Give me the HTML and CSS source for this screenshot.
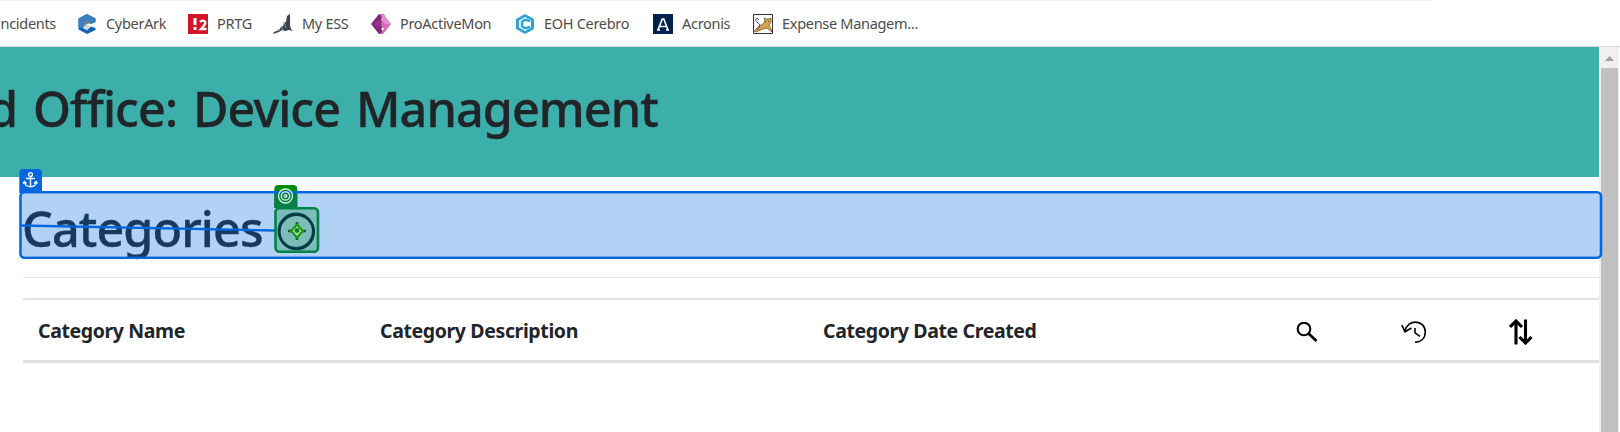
FILE: index.html
```html
<!DOCTYPE html>
<html lang="en">
<head>
<meta charset="utf-8">
<title>Device Management</title>
<link rel="stylesheet" href="styles.css">
</head>
<body>
<nav class="bookmarks">
  <span class="mark first"><b>ncidents</b></span>
  <span class="mark"><svg width="20" height="20" viewBox="0 0 20 20"><path d="m10 0 8.500 4.500V8L14 10l-4-2.500L6 9v5l4 2 4-3.500 4.500 1.500v2L10 20l-8.500-4.500v-11z" fill="#1763b4"/><path d="M1.500 4.500 10 0l8.500 4.500V8L14 10l-4-3-4.500 2v5l-4-1z" fill="#3d80c2"/><path d="m6 9 4-3 4 3-4 1-4 4z" fill="#777e86"/><path d="m10 10 4 2.500-4 3.500-4-2z" fill="#c9d8e8"/></svg><b>CyberArk</b></span>
  <span class="mark"><svg width="20" height="20" viewBox="0 0 20 20"><path d="M0 0h20v20H0z" fill="#d31623"/><path d="M7 4v7M7 13v3" stroke="#fff" stroke-width="3"/><path d="M12 8q2-2 4-1 2 1 1 3-1 2-4 5h5.500" fill="none" stroke="#fff" stroke-width="2.300"/></svg><b>PRTG</b></span>
  <span class="mark"><svg width="20" height="20" viewBox="0 0 20 20"><path d="M14 2 17 0v11l1 4 2 2-4-1-4 1-3-1-3 2-6 2 1-2 5-2 2-3 2-1 1-3 2-1z" fill="#3b4352"/><path d="m5 15 2 2m1-5 2 4m1-8 2 6" stroke="#8b929d"/></svg><b>My ESS</b></span>
  <span class="mark"><svg width="20" height="20" viewBox="0 0 20 20"><path d="M8 0h4l2 2-4 4 4 4-4 5 3 3-2 2H8L0 10z" fill="#7e2879"/><path d="M8 0h4l8 10-8 10H9l4-5-4-5 4-5z" fill="#d86bb9"/><path d="M12 0 20 10h-6l-4-5z" fill="#e391cc"/><path d="m7 5 4 5-4 5-4-5z" fill="#98308f"/></svg><b>ProActiveMon</b></span>
  <span class="mark"><svg width="20" height="20" viewBox="0 0 20 20"><path d="m10 0 9 5v10l-9 5-9-5V5z" fill="#2ba3d4"/><path d="m10 3 6 3.500v7L10 17l-6-3.500v-7z" fill="#fff"/><path d="M14 8V7l-2-1H9L7 8v4l2 2h3l2-1v-1" fill="none" stroke="#2ba3d4" stroke-width="2.400"/></svg><b>EOH Cerebro</b></span>
  <span class="mark"><svg width="20" height="20" viewBox="0 0 20 20"><path d="M0 0h20v20H0z" fill="#00204d"/><path d="M5 16 9.200 5h1.600L15 16M6 12.500h8M4 16h3m6 0h3" fill="none" stroke="#fff" stroke-width="1.700"/></svg><b>Acronis</b></span>
  <span class="mark"><svg width="20" height="20" viewBox="0 0 20 20"><path d="M.5.5h19v19H.5z" fill="#fff" stroke="#333"/><path d="m11 4 2 1h3l2-1v4l-2 3 2 4 1 3-5-4-4 1-7 3-2-1 5-5 4-2 2-3z" fill="#d5a14d" stroke="#66502c" stroke-width=".7"/><path d="M4 16Q9 11 5 9 1 6 4 4l2 2M12 7l1 1m2-1 1 1" fill="none" stroke="#555"/></svg><b>Expense Managem...</b></span>
</nav>
<div class="viewport">
  <main class="page">
    <header class="banner"><h1 class="banner-title">d Office: Device Management</h1></header>
    <section class="heading"><h1 class="title">Categories</h1>
      <svg class="add" width="38" height="38" viewBox="0 0 38 38"><circle cx="19" cy="19" r="17.200" fill="none" stroke="#212529" stroke-width="2.600"/></svg>
    </section>
    <div class="row">
      <span class="th">Category Name</span>
      <span class="th">Category Description</span>
      <span class="th">Category Date Created</span>
      <svg width="22" height="26" viewBox="0 0 22 26"><circle cx="8" cy="10" r="6.300" fill="none" stroke="#000" stroke-width="2.100"/><path d="m12.500 14.500 8 7.500" stroke="#000" stroke-width="2.700"/></svg>
      <svg width="26" height="26" viewBox="0 0 26 26"><path d="M4 12C6 0 24 0 24.300 13c0 6-4 10-10.300 10.300M.8 6.200 4 12.800 10.500 9M14 9v4.800l5 3.500" fill="none" stroke="#000" stroke-width="1.600"/></svg>
      <svg width="24" height="26" viewBox="0 0 24 26"><path d="M7 25.500V3M1 8l6-6 6 6M16.500.5V23M10.500 18l6 6 6-6" fill="none" stroke="#000" stroke-width="3.100"/></svg>
    </div>
  </main>
  <aside class="scrollbar"><svg width="19" height="21" viewBox="0 0 19 21"><path d="M6 14h9l-4.500-5z" fill="#a0a0a0"/></svg><div class="thumb"></div></aside>
</div>
<svg class="overlay" width="1620" height="110" viewBox="0 0 1620 110">
  <path d="M274.300 48V29q0-4 4-4h15q4 0 4 4v19z" fill="#008a0e"/>
  <path d="M274.300 33h23v15h-23z" fill="#008047"/>
  <rect x="20.500" y="32.300" width="1580.500" height="65.500" rx="4" fill="none" stroke="#0067df" stroke-width="2.600"/>
  <path d="M21.800 33.600H274.300V48H297.300V33.600H1599.700V96.500H21.800z" fill="#0069de" fill-opacity=".3"/>
  <g fill="none" stroke="#d8f2e0" stroke-width="1.300"><circle cx="285.500" cy="36" r="7"/><circle cx="285.500" cy="36" r="4.200"/><circle cx="285.500" cy="36" r="1.300"/></g>
  <path d="M19.300 33V13q0-4 4-4H38q4 0 4 4v20z" fill="#0067df"/>
  <g fill="none" stroke="#fff" stroke-width="1.400"><circle cx="30.500" cy="14.500" r="1.900"/><path d="M30.500 16.500V27M26 18.500h9M24.500 21.500c0 7 12 7 12 0m-13.500 2 1.500-2 2 2m7.500 0 2-2 1.500 2"/></g>
  <path d="m20 65.500 255 5" stroke="#0067df" stroke-width="2.400"/>
  <rect x="275.500" y="48.300" width="42.500" height="43.500" rx="4" fill="#008a30" fill-opacity=".3" stroke="#008345" stroke-width="2.600"/>
  <circle cx="296.500" cy="71.800" r="17.200" fill="none" stroke="#003b48" stroke-width="2.600"/>
  <path d="M297 62v4m0 10v4m-9-9h4m10 0h4" stroke="#145b2d" stroke-width="2.600"/>
  <path d="m297 64.500 6 6.500-6 6.500-6-6.500z" fill="#a9d9a9" stroke="#159b10" stroke-width="2"/><circle cx="297" cy="70.500" r="2.400" fill="#138016"/>
</svg>
</body>
</html>
```
FILE: styles.css
```css
* { box-sizing: border-box; }
body { margin: 0; width: 1620px; height: 432px; overflow: hidden; position: relative; background: #fff; color: #212529; font-family: "Noto Sans", "Open Sans", sans-serif; }
svg { display: block; flex: none; }
.bookmarks { height: 47px; display: grid; grid-template-columns: 77px 111px 85px 98px 144px 138px 100px 1fr; align-items: center; border-bottom: 1px solid #d9d9d9; background: linear-gradient(#f2f2f2, #f2f2f2) 0 0 / 1432px 1px no-repeat; padding-top: 1px; }
.mark { display: flex; align-items: center; gap: 9px; white-space: nowrap; font-size: 14.5px; line-height: 20px; }
.mark b { font-weight: 400; color: #4c4c4c; letter-spacing: -.3px; padding-bottom: 2px; }
.first { width: 56px; justify-content: flex-end; }
.viewport { display: flex; height: 385px; }
.page { width: 1599px; }
.banner { height: 130px; background: #3cafaa; display: flex; align-items: center; padding-bottom: 9px; }
.banner-title, .title { margin: 0; white-space: nowrap; font-size: 48.5px; line-height: 60px; font-weight: 500; letter-spacing: -.9px; -webkit-text-stroke: .4px #212529; }
.banner-title { width: 658px; display: flex; justify-content: flex-end; word-spacing: 4px; }
.heading { margin-left: 23px; height: 101px; display: flex; align-items: flex-start; padding-top: 21px; border-bottom: 1px solid #e5e5e5; }
.title { width: 255px; margin-left: -1px; }
.add { margin-top: 14px; }
.row { margin: 20px 0 0 23px; height: 65px; border-top: 2px solid #dee2e6; border-bottom: 3px solid #dee2e6; display: grid; grid-template-columns: 342px 443px 473px 105px 108px 1fr; align-items: center; padding-left: 15px; padding-top: 4px; }
.th { font-size: 19.5px; font-weight: 700; white-space: nowrap; letter-spacing: -.38px; padding-bottom: 3px; }
.scrollbar { width: 20px; background: #f0f0f0; padding: 0 1px 0 0; display: flex; flex-direction: column; }
.thumb { margin-left: 2px; width: 17px; flex: 1; background: #c1c1c1; }
.overlay { position: absolute; left: 0; top: 160px; }
```
